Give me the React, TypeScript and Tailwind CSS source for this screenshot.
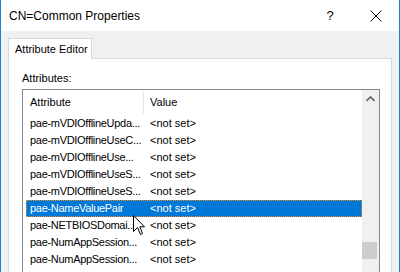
import { ReactNode } from 'react';

const rows = [
  'pae-mVDIOfflineUpda...',
  'pae-mVDIOfflineUseC...',
  'pae-mVDIOfflineUse...',
  'pae-mVDIOfflineUseS...',
  'pae-mVDIOfflineUseS...',
  'pae-NameValuePair',
  'pae-NETBIOSDomai...',
  'pae-NumAppSession...',
  'pae-NumAppSession...',
];

const SELECTED = 5;

function Row({ name, selected }: { name: string; selected: boolean }) {
  return (
    <div
      className={`ml-[3px] flex h-[17px] items-center whitespace-nowrap ${
        selected ? 'border border-dotted border-[#f08a24] bg-[#0078d7] text-white' : 'border border-transparent text-black'
      }`}
    >
      <span className="w-[123px] pl-[3px] tracking-[-0.3px]">{name}</span>
      <span>&lt;not set&gt;</span>
    </div>
  );
}

function Cursor() {
  return (
    <svg className="absolute left-[132px] top-[215px]" width="13" height="21" viewBox="0 0 13 21">
      <path
        d="M0.5 0.5 L0.5 16.5 L4.5 12.5 L7.5 19.5 L9.5 18.5 L6.8 11.8 L11.5 11.8 Z"
        fill="#fff"
        stroke="#000"
        strokeWidth="1"
        strokeLinejoin="miter"
      />
    </svg>
  );
}

function TitleBar({ children }: { children: ReactNode }) {
  return (
    <div className="flex h-[31px] items-center bg-white pl-[8px] text-[12px] text-black">
      <span className="flex-1">{children}</span>
      <span className="w-[46px] text-center text-[13px]">?</span>
      <span className="flex w-[46px] items-center justify-center">
        <svg width="12" height="12" viewBox="0 0 12 12">
          <path d="M0.5 0.5 L11.5 11.5 M11.5 0.5 L0.5 11.5" stroke="#000" strokeWidth="1" />
        </svg>
      </span>
    </div>
  );
}

export default function App() {
  return (
    <div
      className="relative h-[272px] w-[400px] overflow-hidden border-x border-[#1883d7] bg-[#f0f0f0]"
      style={{ fontFamily: '"Liberation Sans", Arial, sans-serif' }}
    >
      <TitleBar>CN=Common Properties</TitleBar>

      <div className="px-[7px] pt-[7px] text-[11px]">
        <div className="relative z-10 -mb-px flex h-[21px] w-[84px] items-center border border-b-0 border-[#d9d9d9] bg-white pl-[6px] text-black">
          Attribute Editor
        </div>
        <div className="h-[300px] border border-[#d9d9d9] bg-white pl-[13px] pr-[11px] pt-[11px]">
          <div className="mb-[3px] h-[16px] text-black">Attributes:</div>
          <div className="flex h-[300px] border border-[#828790] bg-white">
            <div className="flex-1">
              <div className="flex h-[25px] items-center text-black">
                <span className="w-[120px] pl-[7px]">Attribute</span>
                <span className="h-[22px] w-px bg-[#e5e5e5]" />
                <span className="pl-[6px]">Value</span>
              </div>
              {rows.map((r, i) => (
                <Row key={i} name={r} selected={i === SELECTED} />
              ))}
            </div>
            <div className="flex w-[17px] flex-col bg-[#f0f0f0]">
              <div className="flex h-[17px] items-center justify-center">
                <svg width="9" height="6" viewBox="0 0 9 6">
                  <path d="M0.5 5 L4.5 1 L8.5 5" fill="none" stroke="#606060" strokeWidth="1.6" />
                </svg>
              </div>
              <div className="h-[135px]" />
              <div className="h-[17px] w-[15px] bg-[#cdcdcd]" />
            </div>
          </div>
        </div>
      </div>

      <Cursor />
    </div>
  );
}
